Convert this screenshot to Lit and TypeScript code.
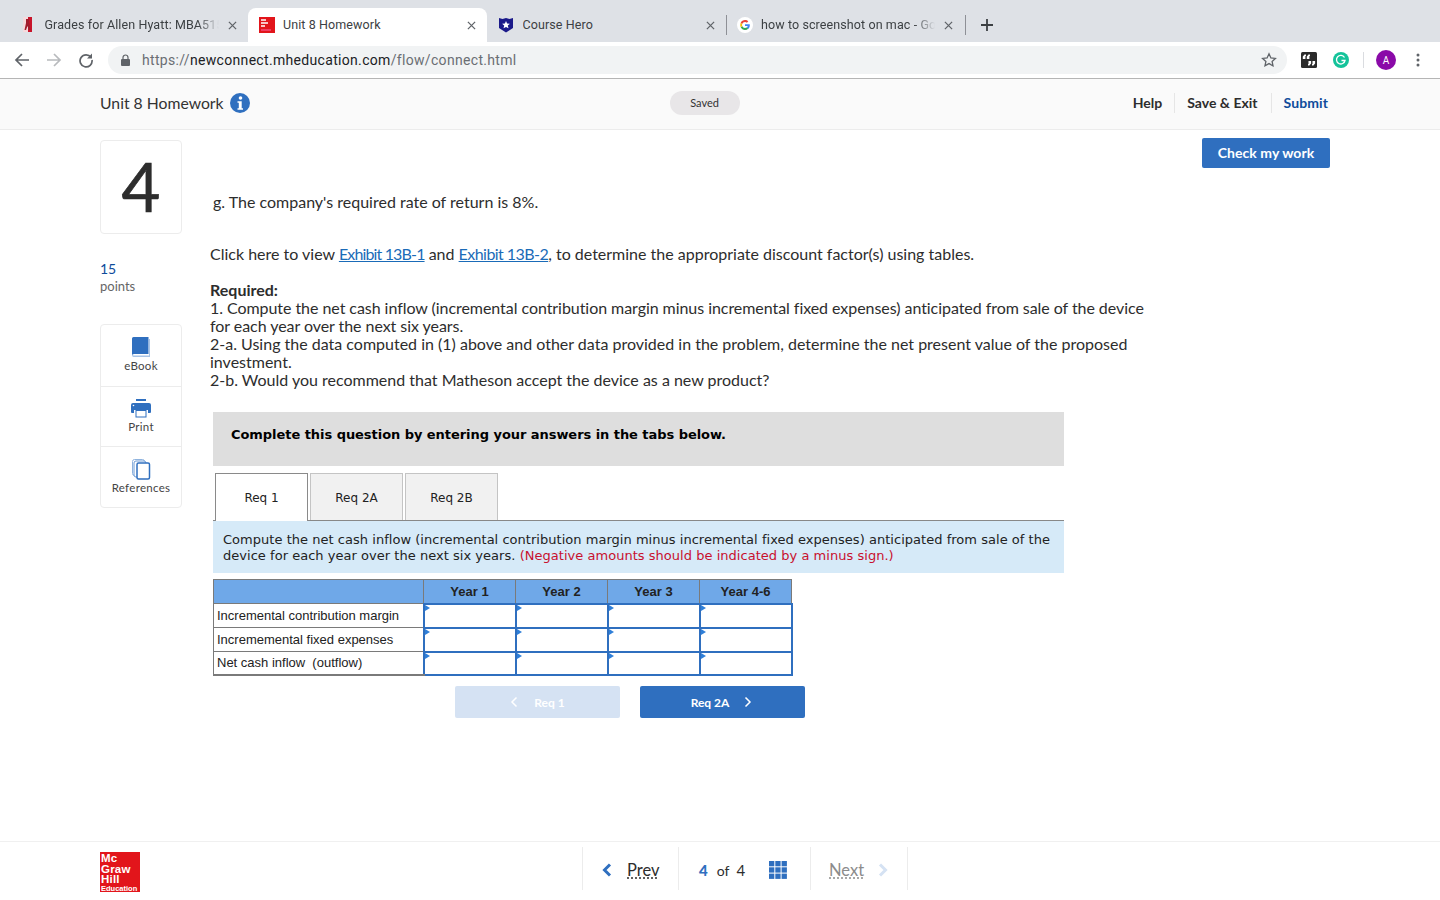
import { LitElement, html, css } from "lit";
import { customElement } from "lit/decorators.js";

const closeX = html`<svg class="x" viewBox="0 0 10 10"><path d="M1 1l8 8M9 1l-8 8" stroke="#5f6368" stroke-width="1.4" fill="none"/></svg>`;

@customElement("app-root")
export class AppRoot extends LitElement {
  static styles = css`
    :host { display: block; width: 1440px; height: 900px; overflow: hidden; background: #fff; font-family: Lato, "Open Sans", sans-serif; color: #2d2d2d; }
    * { box-sizing: border-box; }
    .strip { height: 42px; background: #dee1e6; display: flex; align-items: flex-end; padding-left: 8px; font-family: Roboto, sans-serif; font-size: 12.5px; letter-spacing: 0.1px; color: #3c4043; }
    .tab { width: 239.5px; height: 34px; display: flex; align-items: center; padding: 0 11px 0 11px; gap: 8.5px; }
    .tab.first { padding-left: 12px; }
    .tab.third { padding-right: 12px; }
    .tab.active { background: #fff; border-radius: 8px 8px 0 0; }
    .tab.sep { height: 20px; margin-bottom: 7px; border-left: 1px solid #8e9096; border-right: 1px solid #8e9096; padding: 0 12px 0 10px; margin-left: -1px; width: 240px; }
    .fav { width: 16px; height: 16px; flex: none; display: block; }
    .tt { flex: 1; white-space: nowrap; overflow: hidden; min-width: 0; padding-bottom: 2px; }
    .tt.fade { -webkit-mask-image: linear-gradient(90deg, #000 88%, transparent); mask-image: linear-gradient(90deg, #000 88%, transparent); }
    .x { width: 9px; height: 9px; flex: none; }
    .plus { margin: 0 0 7px 14px; width: 14px; height: 20px; display: flex; align-items: center; }
    .plus svg { width: 14px; height: 14px; }
    .bar { height: 37px; background: #fff; border-bottom: 1px solid #b5b5b5; display: flex; align-items: flex-start; padding-top: 4px; }
    .nav { width: 22px; height: 28px; display: flex; align-items: center; justify-content: center; }
    .nav svg { width: 16px; height: 16px; }
    .navs { display: flex; gap: 10px; padding-left: 11px; width: 108px; }
    .omni { width: 1179px; height: 28px; border-radius: 14px; background: #f1f3f4; display: flex; align-items: center; padding: 0 10px 0 13px; font-family: Roboto, sans-serif; font-size: 14px; color: #202124; letter-spacing: 0.32px; }
    .omni .lock { width: 9px; height: 12px; margin-right: 12px; }
    .omni .dim { color: #6a6e73; }
    .omni .u { flex: 1; }
    .star { width: 16px; height: 16px; }
    .ext { display: flex; align-items: center; height: 28px; }
    .ext svg { display: block; }
    .e1 { width: 16px; height: 16px; margin-left: 14px; }
    .e2 { width: 16px; height: 16px; margin-left: 16px; }
    .vs { width: 1px; height: 16px; background: #dadce0; margin: 0 12px 0 14px; }
    .av { width: 20px; height: 20px; border-radius: 50%; background: #8a0aa8; color: #fff; font: 10px Roboto, sans-serif; display: flex; align-items: center; justify-content: center; }
    .dots { margin-left: 20px; width: 4px; height: 14px; }

    .hdr { height: 51px; background: #fafafa; border-bottom: 1px solid #ececec; display: flex; align-items: center; padding: 0 112px 2px 100px; }
    .title { font-size: 15.75px; color: #333; padding-bottom: 2px; }
    .info { width: 20px; height: 20px; margin-left: 6px; }
    .saved { margin-left: 420px; width: 70px; height: 24px; border-radius: 12px; background: #e8e6e8; font-size: 11px; display: flex; align-items: center; justify-content: center; color: #333; padding-bottom: 2px; }
    .links { margin-left: auto; display: flex; align-items: center; font-size: 14px; font-weight: 700; color: #2d2d2d; padding-bottom: 1px; }
    .links span { height: 20px; display: flex; align-items: center; }
    .links span + span { border-left: 1px solid #e6e6e6; margin-left: 12px; padding-left: 12px; }
    .links span.sub { color: #0f4c9b; letter-spacing: 0.1px; margin-left: 13px; }

    .main { height: 711px; display: flex; padding: 10px 0 0 100px; }
    .side { width: 82px; flex: none; }
    .num { height: 94px; border: 1px solid #ececec; border-radius: 4px; font-size: 67px; line-height: 90px; text-align: center; color: #2d2d2d; -webkit-text-stroke: 0.7px #2d2d2d; }
    .pts { margin-top: 26px; font-size: 13px; line-height: 16px; color: #666; }
    .pts b { display: block; font-weight: 400; font-size: 14px; line-height: 18px; color: #0f4c9b; }
    .tools { margin-top: 30px; height: 184px; border: 1px solid #ececec; border-radius: 4px; display: flex; flex-direction: column; }
    .tool { height: 60px; border-top: 1px solid #ececec; display: flex; flex-direction: column; align-items: center; padding-top: 10px; font-size: 11.5px; color: #444; gap: 1px; letter-spacing: 0.3px; }
    .tool:first-child { border-top: 0; padding-top: 11px; height: 61px; }
    .tool:last-child { padding-top: 11px; height: 61px; }
    .tool svg { width: 22px; height: 22px; display: block; flex: none; }
    .body { width: 940px; margin-left: 28px; flex: none; font-size: 16px; line-height: 18px; color: #2d2d2d; }
    .g { padding: 53px 0 0 3px; }
    .p1 { margin-top: 34px; }
    .p1 a { color: #1a6bb8; text-decoration: underline; letter-spacing: -0.85px; }
    .p1 a.two { letter-spacing: -0.55px; }
    .req { margin-top: 18px; }
    .tight { letter-spacing: -0.055px; }
    .grey { margin: 23px 0 0 3px; width: 851px; height: 54px; background: #dedede; padding: 15px 18px; font: 700 13px/16px "DejaVu Sans", Verdana, sans-serif; letter-spacing: -0.05px; color: #000; }
    .tabs { display: flex; gap: 2px; margin: 7px 0 0 3px; width: 851px; border-bottom: 1px solid #888; padding-left: 2px; height: 48px; font: 12px "DejaVu Sans", Verdana, sans-serif; color: #222; }
    .t { width: 93px; height: 47px; padding-top: 1px; background: #f1f1f1; border: 1px solid #c4c4c4; border-bottom: 0; display: flex; align-items: center; justify-content: center; }
    .t.on { background: #fff; border-color: #8a8a8a; height: 48px; padding-top: 0; }
    .inst { margin-left: 3px; width: 851px; height: 52px; background: #d6eaf8; padding: 11px 10px 0; font: 13px/16px "DejaVu Sans", Verdana, sans-serif; letter-spacing: 0.03px; color: #222; }
    .inst em { font-style: normal; color: #c8102e; }
    table { margin: 6px 0 0 3px; border-collapse: collapse; table-layout: fixed; width: 578px; font: 13px "Liberation Sans", Arial, sans-serif; color: #222; }
    th { background: #6fa8e8; border: 1px solid #7a7a7a; height: 24px; padding: 0; font-size: 13px; font-weight: 700; color: #222; }
    td { border: 1px solid #7a7a7a; height: 24px; padding: 0 0 0 3px; }
    tr:last-child td { height: 23px; border-bottom-width: 2px; }
    td.i { padding: 0; position: relative; border: 2px solid #2f6fbf; background: #fff; }
    td.i::before { content: ""; position: absolute; left: 0; top: 0; border-left: 5px solid #2f7fd8; border-top: 3.5px solid transparent; border-bottom: 3.5px solid transparent; }
    .btns { display: flex; gap: 20px; margin: 10px 0 0 245px; }
    .btn { width: 165px; height: 32px; border-radius: 2px; background: #2f6fbf; color: #fff; font: 700 12px Lato, sans-serif; display: flex; align-items: center; justify-content: center; gap: 15px; padding: 1px 2px 0 0; }
    .btn.off { background: #d5e2f3; gap: 16px; padding: 1px 0 0; }
    .btn svg { width: 8px; height: 12px; }
    .check { margin: -2px 0 0 52px; width: 128px; height: 30px; border-radius: 2px; background: #2f6fbf; color: #fff; font-weight: 700; font-size: 14px; letter-spacing: 0.05px; display: flex; align-items: center; justify-content: center; padding-bottom: 2px; }

    .foot { height: 59px; border-top: 1px solid #f0f0f0; display: flex; padding: 5px 0 0 100px; }
    .logo { width: 40px; height: 40px; margin-top: 5px; background: #e2151b; color: #fff; font: 700 11.5px/10.5px "Liberation Sans", sans-serif; letter-spacing: 0.2px; padding: 1px 0 0 1px; overflow: hidden; }
    .logo small { font-size: 7.5px; display: block; line-height: 7px; letter-spacing: 0; }
    .pager { margin-left: 442px; display: flex; height: 43px; border-left: 1px solid #ececec; border-right: 1px solid #ececec; }
    .pg { display: flex; align-items: center; font-size: 16.5px; color: #2d2d2d; padding-top: 3px; }
    .prev { width: 96px; padding-left: 19px; gap: 15px; border-right: 1px solid #ececec; }
    .cnt { width: 132px; padding-left: 20px; font-size: 15px; border-right: 1px solid #ececec; }
    .cnt b { color: #2f6fbf; font-weight: 900; margin-right: 9px; }
    .cnt i { font-style: normal; margin-right: 7px; font-size: 14px; }
    .cnt svg { width: 18px; height: 18px; margin-left: 24px; }
    .next { width: 96px; padding-left: 18px; gap: 14px; color: #8c8c8c; }
    .pg u { text-decoration: underline dotted; text-underline-offset: 2px; }
    .pg > svg.ch { width: 10px; height: 14px; }
  `;

  render() {
    const cells = html`<td class="i"></td><td class="i"></td><td class="i"></td><td class="i"></td>`;
    return html`
      <div class="strip">
        <div class="tab first">
          <svg class="fav" viewBox="0 0 16 16"><rect x="3" width="5" height="15" fill="#f6d9dc"/><rect x="8" width="4" height="15" fill="#c8142a"/><path d="M6 2h3v3l1.500 8H9L7.500 9 6 13H4.500L6 6z" fill="#a01c2c"/></svg>
          <span class="tt fade">Grades for Allen Hyatt: MBA515</span>${closeX}
        </div>
        <div class="tab active">
          <svg class="fav" viewBox="0 0 16 16"><rect width="16" height="16" fill="#e2151b"/><path d="M2 3h5M2 6h7M2 9h4" stroke="#fff" stroke-width="1.300"/><path d="M2 13h10" stroke="#f6a" stroke-width="1"/></svg>
          <span class="tt">Unit 8 Homework</span>${closeX}
        </div>
        <div class="tab third">
          <svg class="fav" viewBox="0 0 16 16"><path d="M1 1l3.500 1L8 1l3.500 1L15 1v10l-7 4.500L1 11z" fill="#1b1a8a"/><path d="M8 4l1.100 2.600 2.800.2-2.100 1.800.7 2.700L8 9.900l-2.500 1.400.7-2.700L4.100 6.800l2.800-.2z" fill="#fff"/></svg>
          <span class="tt">Course Hero</span>${closeX}
        </div>
        <div class="tab sep">
          <svg class="fav" viewBox="0 0 16 16"><circle cx="8" cy="8" r="8" fill="#fff"/><path d="M12.800 8.200c0-.4 0-.7-.1-1H8v1.900h2.700c-.1.700-.5 1.200-1 1.600l1.500 1.200c.9-.8 1.600-2.100 1.600-3.700z" fill="#4285f4"/><path d="M8 13c1.300 0 2.400-.4 3.200-1.200l-1.500-1.200c-.4.300-1 .5-1.700.5-1.300 0-2.400-.9-2.800-2L3.700 10.300C4.500 11.900 6.100 13 8 13z" fill="#34a853"/><path d="M5.200 9.100c-.2-.7-.2-1.500 0-2.200L3.700 5.700c-.6 1.300-.6 3.300 0 4.600z" fill="#fbbc05"/><path d="M8 5c.7 0 1.400.2 1.900.7l1.400-1.400C10.400 3.500 9.300 3 8 3 6.100 3 4.500 4.100 3.700 5.700l1.500 1.200C5.600 5.800 6.700 5 8 5z" fill="#ea4335"/></svg>
          <span class="tt fade">how to screenshot on mac - Go</span>${closeX}
        </div>
        <div class="plus"><svg viewBox="0 0 14 14"><path d="M7 1v12M1 7h12" stroke="#3c4043" stroke-width="1.800" fill="none"/></svg></div>
      </div>
      <div class="bar">
        <div class="navs">
          <div class="nav"><svg viewBox="0 0 16 16"><path d="M15 8H2M8 2L2 8l6 6" stroke="#5f6368" stroke-width="1.700" fill="none"/></svg></div>
          <div class="nav"><svg viewBox="0 0 16 16"><path d="M1 8h13M8 2l6 6-6 6" stroke="#b8babd" stroke-width="1.700" fill="none"/></svg></div>
          <div class="nav"><svg viewBox="0 0 16 16"><path d="M13 5.500A6 6 0 1 0 14 8" stroke="#5f6368" stroke-width="1.700" fill="none"/><path d="M14 1.500v5h-5z" fill="#5f6368"/></svg></div>
        </div>
        <div class="omni">
          <svg class="lock" viewBox="0 0 9 12"><path d="M2 5V3.500a2.500 2.500 0 0 1 5 0V5" stroke="#5f6368" stroke-width="1.200" fill="none"/><rect y="5" width="9" height="7" rx="1" fill="#5f6368"/></svg>
          <span class="u"><span class="dim">https://</span>newconnect.mheducation.com<span class="dim">/flow/connect.html</span></span>
          <svg class="star" viewBox="0 0 16 16"><path d="M8 1.800l1.900 4.100 4.500.5-3.300 3 .9 4.400L8 11.600l-4 2.200.9-4.400-3.300-3 4.500-.5z" stroke="#5f6368" stroke-width="1.300" fill="none"/></svg>
        </div>
        <div class="ext">
          <svg class="e1" viewBox="0 0 16 16"><rect width="16" height="16" rx="1.500" fill="#2b2b2b"/><path d="M1.800 7V4.500L3.500 2.500H5V4h-.6v3zM5.800 7V4.500L7.500 2.500H9V4h-.6v3zM7.500 9h2.600v2.500L8.400 13.500H7V12h.5zM11.500 9h2.600v2.500l-1.700 2H11V12h.5z" fill="#fff"/></svg>
          <svg class="e2" viewBox="0 0 16 16"><circle cx="8" cy="8" r="8" fill="#15c39a"/><path d="M11.500 5.500A4.300 4.300 0 1 0 12 8.500H8.500" stroke="#fff" stroke-width="1.300" fill="none"/></svg>
          <div class="vs"></div>
          <div class="av">A</div>
          <svg class="dots" viewBox="0 0 4 14"><circle cx="2" cy="2" r="1.500" fill="#5f6368"/><circle cx="2" cy="7" r="1.500" fill="#5f6368"/><circle cx="2" cy="12" r="1.500" fill="#5f6368"/></svg>
        </div>
      </div>
      <div class="hdr">
        <span class="title">Unit 8 Homework</span>
        <svg class="info" viewBox="0 0 20 20"><circle cx="10" cy="10" r="10" fill="#2f6fbf"/><circle cx="10.500" cy="5" r="1.800" fill="#fff"/><path d="M7.500 8.200h4.200v7h1.300v1.500H7.500v-1.500h1.300V9.700H7.500z" fill="#fff"/></svg>
        <div class="saved">Saved</div>
        <div class="links"><span>Help</span><span>Save &amp; Exit</span><span class="sub">Submit</span></div>
      </div>
      <div class="main">
        <div class="side">
          <div class="num">4</div>
          <div class="pts"><b>15</b>points</div>
          <div class="tools">
            <div class="tool"><svg viewBox="0 0 22 22"><path d="M2 2.500A1.500 1.500 0 0 1 3.500 1H18.500v17H4a2 2 0 0 0-2 1.500z" fill="#2f6fbf"/><path d="M2 19.500a2 2 0 0 0 2 1.500h16V3h-1v16.500H4a1.500 1.500 0 0 1-1.500-1.500" fill="#a9c4e6"/></svg>eBook</div>
            <div class="tool"><svg viewBox="0 -1 22 22"><rect x="6" y="1" width="10" height="2" fill="#2f6fbf"/><path d="M1 7a2 2 0 0 1 2-2h16a2 2 0 0 1 2 2v7a1 1 0 0 1-1 1h-2v-3H4v3H2a1 1 0 0 1-1-1z" fill="#2f6fbf"/><circle cx="3.500" cy="7.500" r="0.800" fill="#fff"/><rect x="6" y="12.500" width="10" height="6.500" fill="#fff" stroke="#2f6fbf"/></svg>Print</div>
            <div class="tool"><svg viewBox="0 0 22 22"><rect x="2.500" y="1.500" width="12" height="16" rx="2" fill="#fff" stroke="#8fb3de"/><rect x="4" y="3" width="12" height="16" rx="2" fill="#fff" stroke="#6b9ad6"/><rect x="7" y="5" width="12.500" height="16" rx="1.500" fill="#fff" stroke="#2f6fbf" stroke-width="1.500"/></svg>References</div>
          </div>
        </div>
        <div class="body">
          <div class="g">g. The company's required rate of return is 8%.</div>
          <div class="p1">Click here to view <a>Exhibit 13B-1</a> and <a class="two">Exhibit 13B-2</a>, to determine the appropriate discount factor(s) using tables.</div>
          <div class="req"><b>Required:</b><br><span class="tight">1. Compute the net cash inflow (incremental contribution margin minus incremental fixed expenses) anticipated from sale of the device for each year over the next six years.</span><br>2-a. Using the data computed in (1) above and other data provided in the problem, determine the net present value of the proposed investment.<br>2-b. Would you recommend that Matheson accept the device as a new product?</div>
          <div class="grey">Complete this question by entering your answers in the tabs below.</div>
          <div class="tabs"><div class="t on">Req 1</div><div class="t">Req 2A</div><div class="t">Req 2B</div></div>
          <div class="inst">Compute the net cash inflow (incremental contribution margin minus incremental fixed expenses) anticipated from sale of the device for each year over the next six years. <em>(Negative amounts should be indicated by a minus sign.)</em></div>
          <table>
            <colgroup><col style="width:210px"><col style="width:92px"><col style="width:92px"><col style="width:92px"><col style="width:92px"></colgroup>
            <tr><th></th><th>Year 1</th><th>Year 2</th><th>Year 3</th><th>Year 4-6</th></tr>
            <tr><td>Incremental contribution margin</td>${cells}</tr>
            <tr><td>Incrememental fixed expenses</td>${cells}</tr>
            <tr><td>Net cash inflow&nbsp; (outflow)</td>${cells}</tr>
          </table>
          <div class="btns">
            <div class="btn off"><svg viewBox="0 0 8 12"><path d="M6.500 1.500L2 6l4.500 4.500" stroke="#fff" stroke-width="1.500" fill="none"/></svg>Req 1</div>
            <div class="btn">Req 2A<svg viewBox="0 0 8 12"><path d="M1.500 1.500L6 6l-4.500 4.500" stroke="#fff" stroke-width="1.500" fill="none"/></svg></div>
          </div>
        </div>
        <div class="check">Check my work</div>
      </div>
      <div class="foot">
        <div class="logo">Mc<br>Graw<br>Hill<small>Education</small></div>
        <div class="pager">
          <div class="pg prev"><svg class="ch" viewBox="0 0 10 14"><path d="M8 1.500L2.500 7 8 12.500" stroke="#2f6fbf" stroke-width="3" fill="none"/></svg><u>Prev</u></div>
          <div class="pg cnt"><b>4</b><i>of</i>4<svg viewBox="0 0 18 18" fill="#2f6fbf"><rect width="5.300" height="5.300"/><rect x="6.300" width="5.300" height="5.300"/><rect x="12.600" width="5.300" height="5.300"/><rect y="6.300" width="5.300" height="5.300"/><rect x="6.300" y="6.300" width="5.300" height="5.300"/><rect x="12.600" y="6.300" width="5.300" height="5.300"/><rect y="12.600" width="5.300" height="5.300"/><rect x="6.300" y="12.600" width="5.300" height="5.300"/><rect x="12.600" y="12.600" width="5.300" height="5.300"/></svg></div>
          <div class="pg next"><u>Next</u><svg class="ch" viewBox="0 0 10 14"><path d="M2 1.500L7.500 7 2 12.500" stroke="#d5e2f3" stroke-width="3" fill="none"/></svg></div>
        </div>
      </div>
    `;
  }
}
